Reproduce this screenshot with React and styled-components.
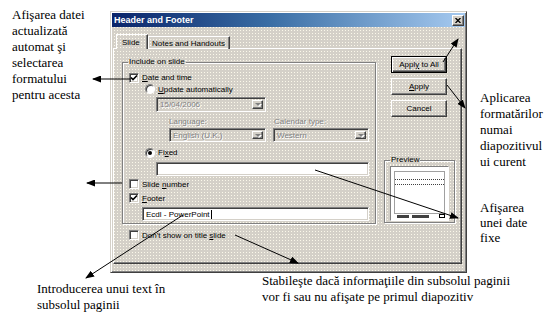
import React from 'react';
import styled, { createGlobalStyle, css } from 'styled-components';

const GlobalStyle = createGlobalStyle`
    html, body {
        margin: 0;
        padding: 0;
        background: #fff;
    }
    body {
        width: 556px;
        height: 328px;
        overflow: hidden;
    }
`;

// dithered win2k grey, a light dot every 3px
const dither = css`
    background-color: #d4d0c8;
    background-image: conic-gradient(from 0deg at 1px 1px, transparent 0deg 270deg, #fbf8ea 270deg 360deg);
    background-size: 3px 3px;
`;

const raised = css`
    border: 1px solid;
    border-color: #fff #404040 #404040 #fff;
    box-shadow: inset -1px -1px 0 #808080;
`;

const sunken = css`
    border: 1px solid;
    border-color: #808080 #fff #fff #808080;
    box-shadow: inset 1px 1px 0 #404040, inset -1px -1px 0 #d4d0c8;
`;

const Page = styled.div`
    position: relative;
    width: 556px;
    height: 328px;
    display: flex;
    flex-direction: column;
    color: #000;
`;

const TopRow = styled.div`
    display: flex;
    align-items: flex-start;
    height: 273px;
`;

const BottomRow = styled.div`
    display: flex;
    align-items: flex-start;
`;

const Note = styled.div`
    box-sizing: border-box;
    font-family: "Liberation Serif", "Tinos", "DejaVu Serif", serif;
    font-size: 13px;
    line-height: ${p => p.$lh || 16}px;
    width: ${p => (p.$w ? `${p.$w}px` : 'auto')};
    padding-left: ${p => p.$left || 0}px;
    margin-top: ${p => p.$top || 0}px;
    white-space: nowrap;
`;

const SideNotes = styled.div`
    display: flex;
    flex-direction: column;
    padding-left: 13px;
    padding-top: 90px;
`;

/* ---------- dialog ---------- */

const Dialog = styled.div`
    box-sizing: border-box;
    width: 357px;
    height: 262px;
    margin-top: 11px;
    padding: 1px;
    ${dither}
    border: 1px solid;
    border-color: #d4d0c8 #404040 #404040 #d4d0c8;
    box-shadow: inset 1px 1px 0 #fff, inset -1px -1px 0 #808080;
    display: flex;
    flex-direction: column;
    font-family: "Liberation Sans", Arial, sans-serif;
    font-size: 8px;
    color: #000;
`;

const TitleBar = styled.div`
    height: 14px;
    display: flex;
    align-items: center;
    justify-content: space-between;
    padding-left: 2px;
    background: linear-gradient(90deg, #0a246a 0%, #3a6ea5 45%, #a6caf0 100%);
    color: #fff;
    font-weight: bold;
    font-size: 9px;
`;

const CloseButton = styled.div`
    box-sizing: border-box;
    width: 12px;
    height: 11px;
    margin-right: 1px;
    ${raised}
    background: #d4d0c8;
    display: flex;
    align-items: center;
    justify-content: center;
`;

const TabRow = styled.div`
    position: relative;
    z-index: 1;
    display: flex;
    align-items: flex-end;
    height: 15px;
    margin-top: 7px;
    padding-left: 4px;
`;

const Tab = styled.div`
    box-sizing: border-box;
    width: ${p => p.$w}px;
    height: ${p => (p.$active ? 15 : 13)}px;
    padding-left: ${p => p.$pad}px;
    display: flex;
    align-items: center;
    border: 1px solid;
    border-bottom: none;
    border-color: #fff #404040 transparent #fff;
    box-shadow: inset -1px 0 0 #808080;
    ${p => p.$active && dither}
`;

const Panel = styled.div`
    box-sizing: border-box;
    height: 216px;
    margin: -1px 3px 0 1px;
    padding: 7px 0 0 8px;
    ${raised}
    display: flex;
    gap: 8px;
`;

const Column = styled.div`
    display: flex;
    flex-direction: column;
    width: ${p => p.$w}px;
`;

const Group = styled.div`
    position: relative;
    box-sizing: border-box;
    width: ${p => p.$w}px;
    height: ${p => p.$h}px;
    margin-top: ${p => p.$mt || 0}px;
    padding: ${p => p.$pad};
    border: 1px solid #808080;
    box-shadow: 1px 1px 0 #fff, inset 1px 1px 0 #fff;
    display: flex;
    flex-direction: column;
`;

const Legend = styled.span`
    position: absolute;
    top: -6px;
    left: 5px;
    padding: 0 1px;
    line-height: 10px;
    ${dither}
`;

const Row = styled.div`
    display: flex;
    align-items: center;
    gap: ${p => p.$gap ?? 3}px;
    height: ${p => p.$h}px;
    margin-top: ${p => p.$mt || 0}px;
    padding-left: ${p => p.$indent || 0}px;
`;

const Box = styled.span`
    box-sizing: border-box;
    flex: none;
    width: 10px;
    height: 10px;
    ${sunken}
    background: #fff;
    display: flex;
    align-items: center;
    justify-content: center;
`;

const Radio = styled(Box)`
    border-radius: 50%;
    box-shadow: inset 1px 1px 0 #404040;
`;

const Dot = styled.span`
    width: 4px;
    height: 4px;
    border-radius: 50%;
    background: #000;
`;

const Muted = styled.span`
    color: #808080;
    text-shadow: 1px 1px 0 #fff;
`;

const Select = styled.div`
    box-sizing: border-box;
    flex: none;
    width: ${p => p.$w}px;
    height: ${p => p.$h}px;
    margin-left: ${p => p.$ml || 0}px;
    margin-top: ${p => p.$mt || 0}px;
    padding: 2px 2px 2px 3px;
    ${sunken}
    display: flex;
    align-items: stretch;
    justify-content: space-between;
`;

const SelectText = styled(Muted)`
    display: flex;
    align-items: center;
`;

const DropButton = styled.span`
    box-sizing: border-box;
    width: 11px;
    ${raised}
    background: #d4d0c8;
    display: flex;
    align-items: center;
    justify-content: center;
`;

const Caret = styled.span`
    width: 0;
    height: 0;
    border-left: 3px solid transparent;
    border-right: 3px solid transparent;
    border-top: 3px solid #808080;
    filter: drop-shadow(1px 1px 0 #fff);
`;

const TextBox = styled.div`
    box-sizing: border-box;
    flex: none;
    width: ${p => p.$w}px;
    height: ${p => p.$h}px;
    margin-left: ${p => p.$ml || 0}px;
    margin-top: ${p => p.$mt || 0}px;
    padding-left: 3px;
    ${sunken}
    background: #fff;
    display: flex;
    align-items: center;
`;

const Cursor = styled.span`
    width: 1px;
    height: 9px;
    margin-left: 1px;
    background: #000;
`;

const LabelCell = styled.span`
    width: ${p => p.$w}px;
`;

const Button = styled.div`
    box-sizing: border-box;
    width: 56px;
    height: 17px;
    margin-left: 7px;
    margin-top: ${p => p.$mt || 0}px;
    display: flex;
    align-items: center;
    justify-content: center;
    white-space: pre;
    ${raised}
    ${p => p.$default && css`
        border-color: #000;
        box-shadow: inset 1px 1px 0 #fff, inset -1px -1px 0 #404040, inset -2px -2px 0 #808080;
    `}
`;

const PreviewFrame = styled.div`
    box-sizing: border-box;
    width: 59px;
    height: 55px;
    border: 1px solid;
    border-color: #808080 #fff #fff #808080;
    background: #fff;
    display: flex;
`;

const Overlay = styled.svg`
    position: absolute;
    left: 0;
    top: 0;
    pointer-events: none;
`;

const arrows = [
    [130, 79, 93, 79],
    [443, 62, 458, 39],
    [447, 85, 465, 108],
    [315, 170, 458, 218],
    [122, 183, 87, 183],
    [183, 215, 86, 278],
    [235, 235, 298, 263],
];

const Check = () => (
    <svg width="8" height="8" viewBox="0 0 8 8">
        <path d="M1 3.5 L3 5.5 L7 1.5" fill="none" stroke="#000" strokeWidth="1.6" />
    </svg>
);

const SlidePreview = () => (
    <svg width="57" height="53" viewBox="0 0 57 53">
        <rect x="3.5" y="4.5" width="50" height="42" fill="none" stroke="#404040" strokeDasharray="1 1" />
        <line x1="4" y1="12.5" x2="53" y2="12.5" stroke="#404040" strokeDasharray="1 1" />
        <line x1="4" y1="17.5" x2="53" y2="17.5" stroke="#404040" strokeDasharray="1 1" />
        <rect x="6" y="48" width="12" height="3" fill="#404040" />
        <rect x="21" y="48" width="17" height="3" fill="#404040" />
        <rect x="48.5" y="47.5" width="5" height="3" fill="#fff" stroke="#000" />
    </svg>
);

const App = () => {
    return (
        <>
            <GlobalStyle />
            <Page>
                <TopRow>
                    <Note $w={110} $left={12} $top={7}>
                        Afişarea datei<br />
                        actualizată<br />
                        automat şi<br />
                        selectarea<br />
                        formatului<br />
                        pentru acesta
                    </Note>

                    <Dialog>
                        <TitleBar>
                            Header and Footer
                            <CloseButton>
                                <svg width="6" height="5" viewBox="0 0 6 5">
                                    <path d="M0.5 0 L5.5 5 M5.5 0 L0.5 5" stroke="#000" strokeWidth="1.3" />
                                </svg>
                            </CloseButton>
                        </TitleBar>

                        <TabRow>
                            <Tab $active $w={32} $pad={5}>Slide</Tab>
                            <Tab $w={82} $pad={3}>Notes and Handouts</Tab>
                        </TabRow>

                        <Panel>
                            <Column $w={254}>
                                <Group $w={254} $h={162} $mt={6} $pad="9px 6px 0">
                                    <Legend>Include on slide</Legend>
                                    <Row $h={11}>
                                        <Box><Check /></Box>
                                        <span><u>D</u>ate and time</span>
                                    </Row>
                                    <Row $h={12} $indent={16}>
                                        <Radio />
                                        <span><u>U</u>pdate automatically</span>
                                    </Row>
                                    <Select $w={110} $h={15} $ml={27} $mt={2}>
                                        <SelectText>15/04/2006</SelectText>
                                        <DropButton><Caret /></DropButton>
                                    </Select>
                                    <Row $h={14} $mt={2} $indent={40} $gap={0}>
                                        <LabelCell $w={105}><Muted>Language:</Muted></LabelCell>
                                        <LabelCell $w={90}><Muted>Calendar type:</Muted></LabelCell>
                                    </Row>
                                    <Row $h={14} $indent={40} $gap={7}>
                                        <Select $w={97} $h={14}>
                                            <SelectText>English (U.K.)</SelectText>
                                            <DropButton><Caret /></DropButton>
                                        </Select>
                                        <Select $w={96} $h={14}>
                                            <SelectText>Western</SelectText>
                                            <DropButton><Caret /></DropButton>
                                        </Select>
                                    </Row>
                                    <Row $h={13} $mt={4} $indent={16}>
                                        <Radio><Dot /></Radio>
                                        <span>Fi<u>x</u>ed</span>
                                    </Row>
                                    <TextBox $w={213} $h={14} $ml={27} $mt={3} />
                                    <Row $h={12} $mt={2}>
                                        <Box />
                                        <span>Slide <u>n</u>umber</span>
                                    </Row>
                                    <Row $h={12} $mt={2}>
                                        <Box><Check /></Box>
                                        <span><u>F</u>ooter</span>
                                    </Row>
                                    <TextBox $w={227} $h={14} $ml={13} $mt={3}>
                                        Ecdl - PowerPoint<Cursor />
                                    </TextBox>
                                </Group>
                                <Row $h={12} $mt={5} $indent={7}>
                                    <Box />
                                    <span>Don't show on title <u>s</u>lide</span>
                                </Row>
                            </Column>

                            <Column $w={71}>
                                <Button $default>Appl<u>y</u> to All</Button>
                                <Button $mt={5}><u>A</u>pply</Button>
                                <Button $mt={5}>Cancel</Button>
                                <Group $w={71} $h={63} $mt={43} $pad="5px 0 0 5px">
                                    <Legend>Preview</Legend>
                                    <PreviewFrame>
                                        <SlidePreview />
                                    </PreviewFrame>
                                </Group>
                            </Column>
                        </Panel>
                    </Dialog>

                    <SideNotes>
                        <Note $lh={16}>
                            Aplicarea<br />
                            formatărilor<br />
                            numai<br />
                            diapozitivul<br />
                            ui curent
                        </Note>
                        <Note $lh={15} $top={30}>
                            Afişarea<br />
                            unei date<br />
                            fixe
                        </Note>
                    </SideNotes>
                </TopRow>

                <BottomRow>
                    <Note $w={262} $left={37} $top={8}>
                        Introducerea unui text în<br />
                        subsolul paginii
                    </Note>
                    <Note $top={0}>
                        Stabileşte dacă informaţiile din subsolul paginii<br />
                        vor fi sau nu afişate pe primul diapozitiv
                    </Note>
                </BottomRow>

                <Overlay width="556" height="328" viewBox="0 0 556 328">
                    <defs>
                        <marker id="head" markerWidth="9" markerHeight="7" refX="8" refY="3.5" orient="auto" markerUnits="userSpaceOnUse">
                            <path d="M0 0 L9 3.5 L0 7 z" fill="#000" />
                        </marker>
                    </defs>
                    {arrows.map(([x1, y1, x2, y2], i) => (
                        <line key={i} x1={x1} y1={y1} x2={x2} y2={y2} stroke="#000" strokeWidth="1" markerEnd="url(#head)" />
                    ))}
                </Overlay>
            </Page>
        </>
    );
};

export default App;
